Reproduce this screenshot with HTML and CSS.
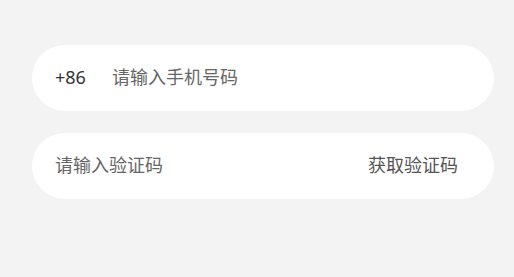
FILE: index.html
```html
<!DOCTYPE html>
<html lang="zh">
<head>
<meta charset="utf-8">
<link rel="stylesheet" href="styles.css">
</head>
<body>
<div class="form">
  <div class="field">
    <span class="prefix">+86</span>
    <span class="placeholder">请输入手机号码</span>
  </div>
  <div class="field field-code">
    <span class="placeholder code-ph">请输入验证码</span>
    <span class="action">获取验证码</span>
  </div>
</div>
</body>
</html>
```
FILE: styles.css
```css
html, body {
  margin: 0;
  padding: 0;
  background: #f3f3f3;
}
body {
  font-family: "Noto Sans", "Noto Sans CJK SC", sans-serif;
  font-size: 18px;
}
.form {
  display: flex;
  flex-direction: column;
  gap: 22px;
  padding: 45px 20px 0 32px;
  width: 462px;
}
.field {
  display: flex;
  align-items: center;
  height: 66px;
  background: #fff;
  border-radius: 33px;
  padding: 0 36px 0 23px;
}
.prefix {
  color: #333;
  width: 57px;
  line-height: 1;
  margin-top: -2px;
}
.placeholder {
  color: #666;
  line-height: 1;
  margin-top: -2px;
}
.code-ph {
  flex: 1;
}
.action {
  color: #555;
  line-height: 1;
  margin-top: -2px;
}
```
